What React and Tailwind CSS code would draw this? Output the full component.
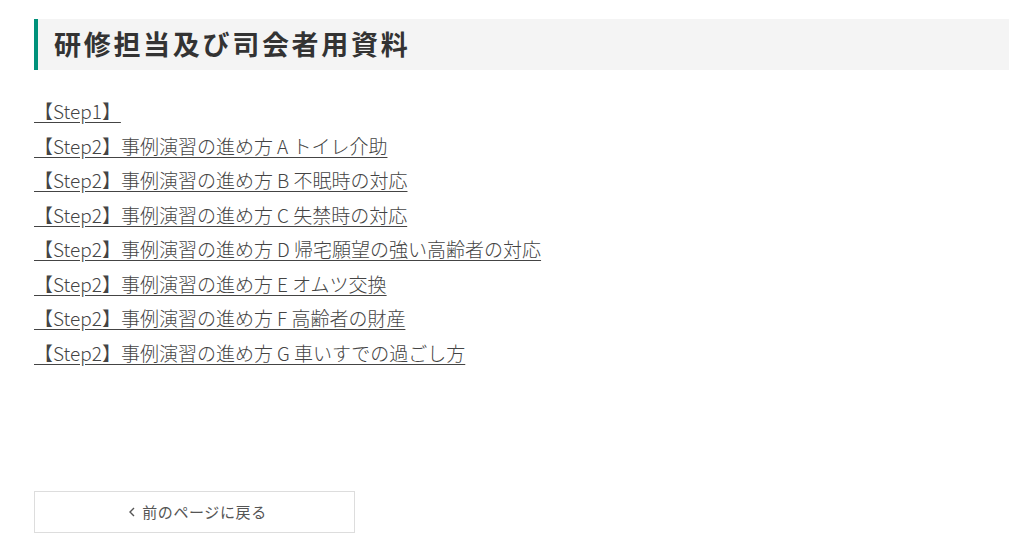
const links = [
  "【Step1】",
  "【Step2】事例演習の進め方 A トイレ介助",
  "【Step2】事例演習の進め方 B 不眠時の対応",
  "【Step2】事例演習の進め方 C 失禁時の対応",
  "【Step2】事例演習の進め方 D 帰宅願望の強い高齢者の対応",
  "【Step2】事例演習の進め方 E オムツ交換",
  "【Step2】事例演習の進め方 F 高齢者の財産",
  "【Step2】事例演習の進め方 G 車いすでの過ごし方",
];

export default function App() {
  return (
    <div
      className="min-h-[556px] bg-white pl-[34px] pt-[19px] text-[#333]"
      style={{ fontFamily: '"Noto Sans CJK JP", "Noto Sans", sans-serif' }}
    >
      <h1 className="flex h-[51px] items-center border-l-4 border-[#00917a] bg-[#f4f4f4] pl-[16px] text-[27px] font-bold tracking-[0.1em] text-[#333]">
        研修担当及び司会者用資料
      </h1>

      <ul className="mt-[24px] flex flex-col">
        {links.map((t) => (
          <li key={t} className="h-[34.5px] text-[19px] font-light leading-[34.5px]">
            <a href="#" className="text-[#444] underline underline-offset-[3px] decoration-[#444]">
              {t}
            </a>
          </li>
        ))}
      </ul>

      <div className="mt-[121px]">
        <a
          href="#"
          className="flex h-[42px] w-[321px] items-center justify-center gap-[7px] border border-[#ddd] pl-[7px] text-[15px] tracking-[0.6px] text-[#555]"
        >
          <svg width="6" height="10" viewBox="0 0 6 10" fill="none" stroke="#555" strokeWidth="1.4">
            <path d="M5 1 L1 5 L5 9" />
          </svg>
          前のページに戻る
        </a>
      </div>
    </div>
  );
}
